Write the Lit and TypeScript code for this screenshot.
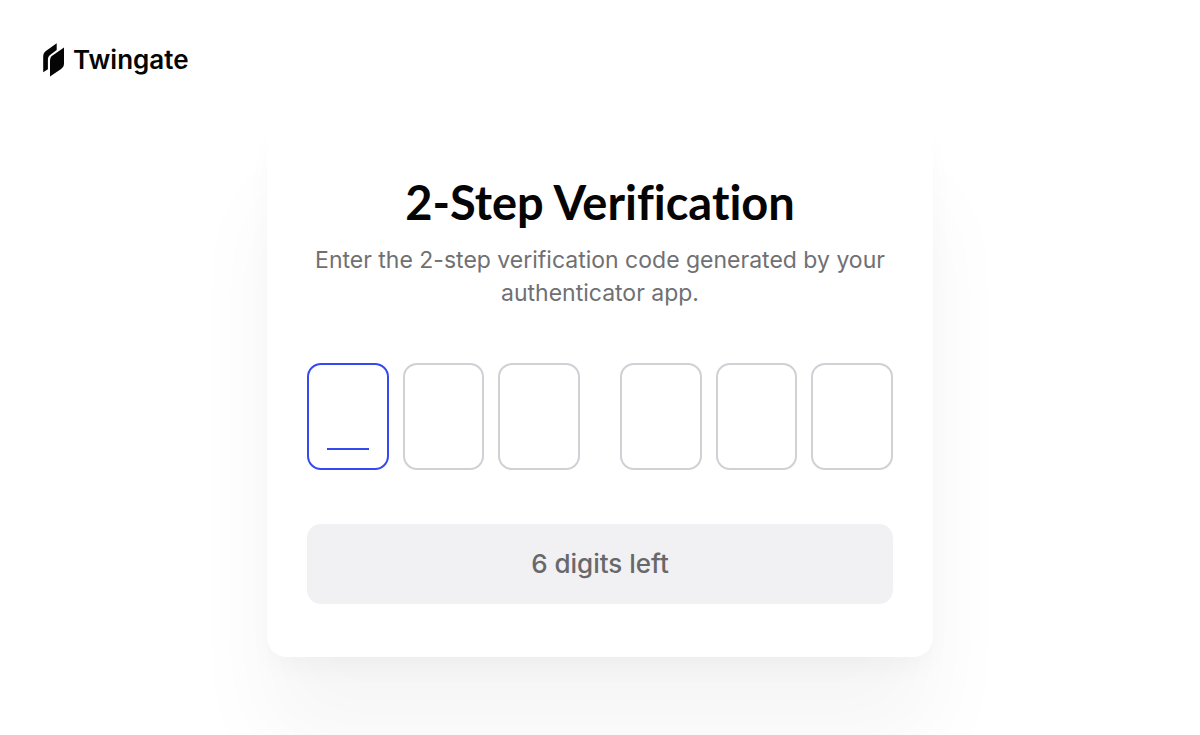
import { LitElement, html, css } from "lit";
import { customElement, property, state } from "lit/decorators.js";
import { classMap } from "lit/directives/class-map.js";

@customElement("brand-logo")
export class BrandLogo extends LitElement {
  static styles = css`
    :host {
      display: block;
    }
    .brand {
      display: inline-flex;
      align-items: center;
      gap: 8px;
      color: #050505;
      text-decoration: none;
      font: 600 26px/34px Inter, sans-serif;
    }
    .mark {
      display: block;
      width: 22px;
      height: 34px;
      fill: currentColor;
    }
  `;

  render() {
    return html`
      <a class="brand" href="#">
        <svg class="mark" viewBox="0 0 22 34" aria-hidden="true">
          <path d="M.2 29.3V13.6C.2 11.1 1.1 9.300 3.200 7.700L13.700 .3V7.100L8 11.200C5.600 12.900 4.900 14.500 4.900 17V26.200Z" />
          <path d="M7 33.5V17.600C7 15.200 7.900 13.600 9.900 12.200L21 4.600V20.500C21 22.900 20.100 24.500 18.100 25.900Z" />
        </svg>
        <span>Twingate</span>
      </a>
    `;
  }
}

@customElement("code-input")
export class CodeInput extends LitElement {
  static styles = css`
    :host {
      display: block;
    }
    .groups {
      display: grid;
      grid-template-columns: 1fr 1fr;
      gap: 40px;
      margin: 0;
      padding: 0;
      border: 0;
    }
    .group {
      display: grid;
      grid-template-columns: repeat(3, 1fr);
      gap: 14px;
    }
    .digit {
      box-sizing: border-box;
      width: 100%;
      height: 107px;
      margin: 0;
      padding: 0;
      border: 2px solid #d0d0d5;
      border-radius: 14px;
      outline: none;
      background: #fff;
      color: #050505;
      caret-color: transparent;
      font: 500 40px/48px Inter, sans-serif;
      text-align: center;
    }
    .digit.active {
      border-color: #3549f0;
    }
    .digit.active.empty {
      background: linear-gradient(#3549f0, #3549f0) center bottom 18px / 42px 2px no-repeat #fff;
    }
  `;

  @property({ type: Number }) length = 6;
  @state() private digits: string[] = Array(6).fill("");
  @state() private active = 0;

  private focusDigit(index: number) {
    const inputs = this.renderRoot.querySelectorAll<HTMLInputElement>(".digit");
    inputs[Math.max(0, Math.min(index, this.length - 1))]?.focus();
  }

  private onInput(event: Event, index: number) {
    const input = event.target as HTMLInputElement;
    const value = input.value.replace(/\D/g, "").slice(-1);
    input.value = value;
    this.digits = this.digits.map((d, i) => (i === index ? value : d));
    if (value) this.focusDigit(index + 1);
    this.dispatchEvent(new CustomEvent("code-change", { detail: this.digits.join("") }));
  }

  private onKeydown(event: KeyboardEvent, index: number) {
    if (event.key === "Backspace" && !this.digits[index]) this.focusDigit(index - 1);
  }

  private renderDigit(index: number) {
    const value = this.digits[index];
    return html`<input
      class=${classMap({ digit: true, active: index === this.active, empty: !value })}
      type="text"
      inputmode="numeric"
      autocomplete="one-time-code"
      aria-label="Digit ${index + 1}"
      .value=${value}
      @focus=${() => (this.active = index)}
      @input=${(e: Event) => this.onInput(e, index)}
      @keydown=${(e: KeyboardEvent) => this.onKeydown(e, index)}
    />`;
  }

  render() {
    return html`
      <fieldset class="groups" aria-label="Verification code">
        <div class="group">${[0, 1, 2].map((i) => this.renderDigit(i))}</div>
        <div class="group">${[3, 4, 5].map((i) => this.renderDigit(i))}</div>
      </fieldset>
    `;
  }
}

@customElement("app-root")
export class AppRoot extends LitElement {
  static styles = css`
    :host {
      display: block;
      box-sizing: border-box;
      min-height: 100vh;
      overflow: hidden;
      background: #fff;
      font-family: Inter, sans-serif;
    }
    .header {
      padding: 43px 43px 0;
    }
    .main {
      display: flex;
      justify-content: center;
      padding: 40px 24px 78px;
    }
    .card {
      box-sizing: border-box;
      width: 100%;
      max-width: 666px;
      padding: 53px 40px;
      border-radius: 20px;
      background: #fff;
      box-shadow: 0 80px 88px rgba(0, 0, 0, 0.04), 0 14px 28px -6px rgba(0, 0, 0, 0.04);
    }
    .title {
      margin: 0;
      color: #050505;
      font: 700 47px/56px Lato, sans-serif;
      font-variant-ligatures: none;
      text-align: center;
    }
    .hint {
      margin: 14px 0 0;
      color: #707073;
      font-size: 23px;
      line-height: 33px;
      text-align: center;
    }
    .code {
      margin-top: 53px;
    }
    .submit {
      display: block;
      width: 100%;
      height: 80px;
      margin-top: 54px;
      padding: 0;
      border: 0;
      border-radius: 14px;
      background: #f1f1f4;
      color: #68686b;
      font: 500 26px/32px Inter, sans-serif;
    }
  `;

  @state() private code = "";

  render() {
    const left = 6 - this.code.length;
    return html`
      <header class="header"><brand-logo></brand-logo></header>
      <main class="main">
        <form class="card" @submit=${(e: Event) => e.preventDefault()}>
          <h1 class="title">2-Step Verification</h1>
          <p class="hint">Enter the 2-step verification code generated by your authenticator app.</p>
          <code-input
            class="code"
            @code-change=${(e: CustomEvent<string>) => (this.code = e.detail)}
          ></code-input>
          <button class="submit" type="submit" ?disabled=${left > 0}>
            ${left > 0 ? `${left} ${left === 1 ? "digit" : "digits"} left` : "Verify"}
          </button>
        </form>
      </main>
    `;
  }
}
